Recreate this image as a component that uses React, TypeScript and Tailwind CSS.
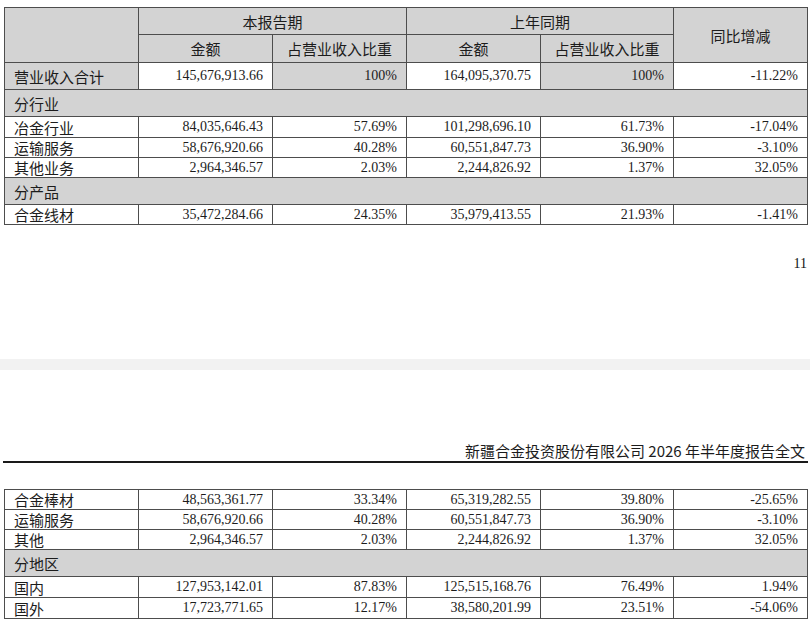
import React from 'react';

// --- Types ---
type Row =
  | { kind: 'data'; label: string; cur: string; curPct: string; prev: string; prevPct: string; yoy: string; h: string }
  | { kind: 'group'; label: string; h: string };

// --- Data ---
const TOP_ROWS: Row[] = [
  { kind: 'group', label: '分行业', h: 'h-[26px]' },
  { kind: 'data', label: '冶金行业', cur: '84,035,646.43', curPct: '57.69%', prev: '101,298,696.10', prevPct: '61.73%', yoy: '-17.04%', h: 'h-[20px]' },
  { kind: 'data', label: '运输服务', cur: '58,676,920.66', curPct: '40.28%', prev: '60,551,847.73', prevPct: '36.90%', yoy: '-3.10%', h: 'h-[19px]' },
  { kind: 'data', label: '其他业务', cur: '2,964,346.57', curPct: '2.03%', prev: '2,244,826.92', prevPct: '1.37%', yoy: '32.05%', h: 'h-[19px]' },
  { kind: 'group', label: '分产品', h: 'h-[26px]' },
  { kind: 'data', label: '合金线材', cur: '35,472,284.66', curPct: '24.35%', prev: '35,979,413.55', prevPct: '21.93%', yoy: '-1.41%', h: 'h-[19px]' },
];

const BOTTOM_ROWS: Row[] = [
  { kind: 'data', label: '合金棒材', cur: '48,563,361.77', curPct: '33.34%', prev: '65,319,282.55', prevPct: '39.80%', yoy: '-25.65%', h: 'h-[19px]' },
  { kind: 'data', label: '运输服务', cur: '58,676,920.66', curPct: '40.28%', prev: '60,551,847.73', prevPct: '36.90%', yoy: '-3.10%', h: 'h-[19px]' },
  { kind: 'data', label: '其他', cur: '2,964,346.57', curPct: '2.03%', prev: '2,244,826.92', prevPct: '1.37%', yoy: '32.05%', h: 'h-[19px]' },
  { kind: 'group', label: '分地区', h: 'h-[26px]' },
  { kind: 'data', label: '国内', cur: '127,953,142.01', curPct: '87.83%', prev: '125,515,168.76', prevPct: '76.49%', yoy: '1.94%', h: 'h-[20px]' },
  { kind: 'data', label: '国外', cur: '17,723,771.65', curPct: '12.17%', prev: '38,580,201.99', prevPct: '23.51%', yoy: '-54.06%', h: 'h-[20px]' },
];

const CJK = "font-['Noto_Sans_CJK_SC',sans-serif]";
const NUM = "font-['Liberation_Serif','Times_New_Roman',serif]";

// --- Cells ---
function Label({ text, gray, h }: { text: string; gray?: boolean; h: string }) {
  return (
    <div className={`${h} ${gray ? 'bg-[#d3d3d3]' : 'bg-white'} flex items-center pl-[9px] text-[15px] leading-none text-[#1c1c1c] ${CJK}`}>
      {text}
    </div>
  );
}

function Num({ text, gray, h }: { text: string; gray?: boolean; h: string }) {
  return (
    <div className={`${h} ${gray ? 'bg-[#d3d3d3]' : 'bg-white'} flex items-center justify-end pr-[9px] text-[14px] leading-none text-[#1c1c1c] ${NUM}`}>
      {text}
    </div>
  );
}

function Head({ text, className = '' }: { text: string; className?: string }) {
  return (
    <div className={`bg-[#d3d3d3] flex items-center justify-center text-[15px] leading-none text-[#1c1c1c] ${CJK} ${className}`}>
      {text}
    </div>
  );
}

function Rows({ rows }: { rows: Row[] }) {
  return (
    <>
      {rows.map((r, i) =>
        r.kind === 'group' ? (
          <div key={i} className="col-span-6">
            <Label text={r.label} gray h={r.h} />
          </div>
        ) : (
          <React.Fragment key={i}>
            <Label text={r.label} h={r.h} />
            <Num text={r.cur} h={r.h} />
            <Num text={r.curPct} h={r.h} />
            <Num text={r.prev} h={r.h} />
            <Num text={r.prevPct} h={r.h} />
            <Num text={r.yoy} h={r.h} />
          </React.Fragment>
        )
      )}
    </>
  );
}

const GRID = 'grid grid-cols-[133px_133px_133px_133px_132px_133px] gap-px p-px bg-[#4d4d4d] w-[804px]';

// --- Main Component ---
export default function App() {
  return (
    <div className="w-[810px] h-[621px] bg-white overflow-hidden">
      <div className="pt-[7px] pl-[4px]">
        <div className={GRID}>
          <Head text="" className="row-span-2" />
          <Head text="本报告期" className="col-span-2 h-[26px]" />
          <Head text="上年同期" className="col-span-2 h-[26px]" />
          <Head text="同比增减" className="row-span-2" />
          <Head text="金额" className="h-[27px]" />
          <Head text="占营业收入比重" className="h-[27px]" />
          <Head text="金额" className="h-[27px]" />
          <Head text="占营业收入比重" className="h-[27px]" />

          <Label text="营业收入合计" gray h="h-[26px]" />
          <Num text="145,676,913.66" h="h-[26px]" />
          <Num text="100%" gray h="h-[26px]" />
          <Num text="164,095,370.75" h="h-[26px]" />
          <Num text="100%" gray h="h-[26px]" />
          <Num text="-11.22%" h="h-[26px]" />

          <Rows rows={TOP_ROWS} />
        </div>
      </div>

      <div className={`mt-[31px] pr-[3px] text-right text-[14px] leading-[16px] text-[#111] ${NUM}`}>11</div>

      <div className="mt-[87px] h-[11px] bg-[#f2f2f2]" />

      <div className={`mt-[72px] pr-[5px] text-right text-[15px] leading-[18px] text-[#1c1c1c] ${CJK}`}>
        新疆合金投资股份有限公司 2026 年半年度报告全文
      </div>
      <div className="mt-[1px] ml-[3px] w-[805px] h-[2px] bg-[#1a1a1a]" />

      <div className="mt-[26px] pl-[4px]">
        <div className={GRID}>
          <Rows rows={BOTTOM_ROWS} />
        </div>
      </div>
    </div>
  );
}
